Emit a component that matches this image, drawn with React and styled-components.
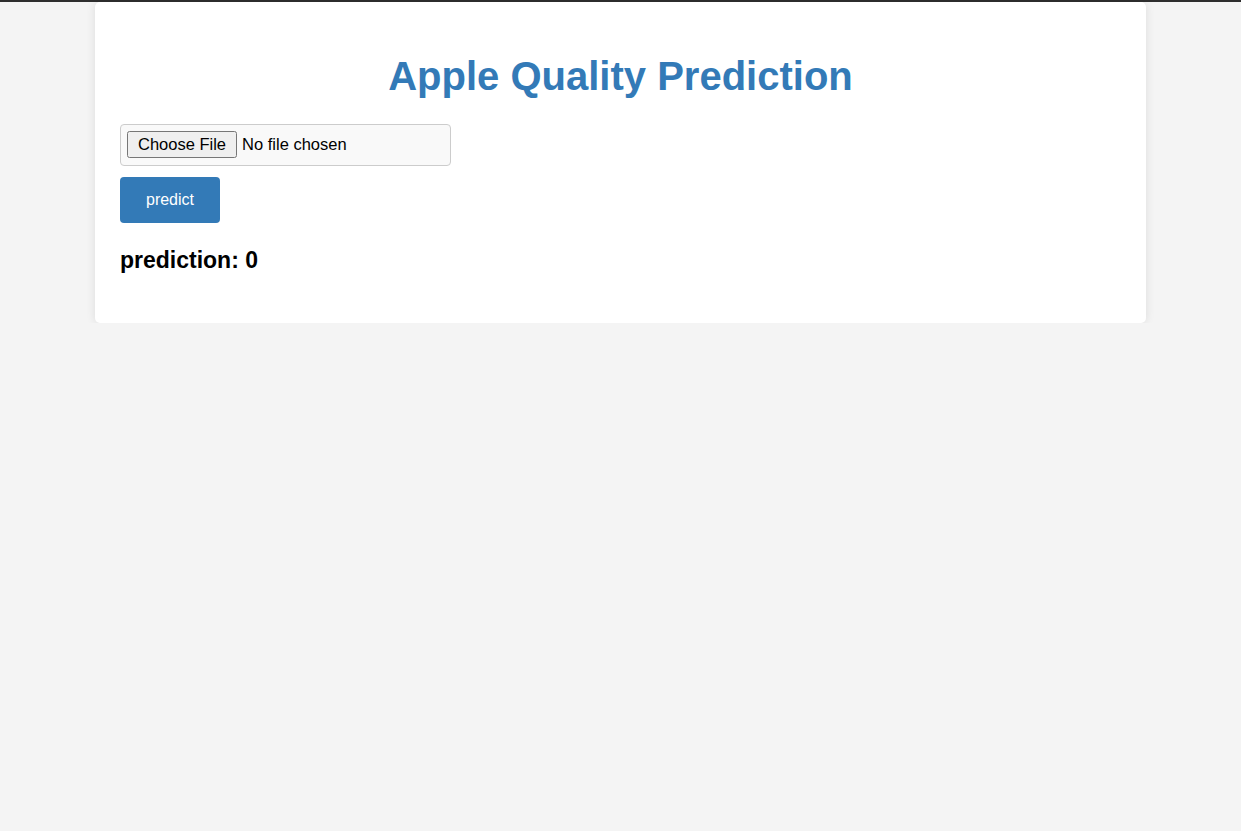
import React, { useState } from "react";
import styled, { createGlobalStyle } from "styled-components";

const GlobalStyle = createGlobalStyle`
  html, body {
    margin: 0;
    padding: 0;
    background-color: #f4f4f4;
    font-family: "Liberation Sans", Arial, sans-serif;
  }
`;

export default function App() {
  const [prediction] = useState(0);

  const onSubmit = (e) => {
    e.preventDefault();
  };

  return (
    <>
      <GlobalStyle />
      <TopBar />
      <Container>
        <Title>Apple Quality Prediction</Title>
        <form onSubmit={onSubmit}>
          <FileInput type="file" name="file" />
          <PredictButton type="submit">predict</PredictButton>
        </form>
        <Result>prediction: {prediction}</Result>
      </Container>
    </>
  );
}

const TopBar = styled.div`
  height: 2px;
  background-color: #2e2e2e;
`;

const Container = styled.div`
  width: 1001px;
  margin: 0 auto;
  padding: 20px 25px 49px;
  background-color: white;
  border-radius: 5px;
  box-shadow: 0 0 10px rgba(0, 0, 0, 0.1);
`;

const Title = styled.h1`
  margin: 32px 0 25px;
  text-align: center;
  color: #337ab7;
  font-size: 40px;
  font-weight: bold;
`;

const FileInput = styled.input`
  display: block;
  box-sizing: border-box;
  width: 331px;
  height: 42px;
  padding: 6px;
  margin: 0 0 11px;
  border: 1px solid #ccc;
  border-radius: 4px;
  background-color: #f9f9f9;
  font-family: "Liberation Sans", Arial, sans-serif;
  font-size: 16.5px;
  color: black;

  &::file-selector-button {
    margin-right: 5px;
    padding: 2px 9px;
    font-family: "Liberation Sans", Arial, sans-serif;
    font-size: 16.5px;
  }
`;

const PredictButton = styled.button`
  display: block;
  box-sizing: border-box;
  width: 100px;
  height: 46px;
  border: none;
  border-radius: 4px;
  background-color: #337ab7;
  color: white;
  font-family: "Liberation Sans", Arial, sans-serif;
  font-size: 16px;
  cursor: pointer;
`;

const Result = styled.h2`
  margin: 24px 0 0;
  font-size: 23px;
  font-weight: bold;
  color: black;
`;
